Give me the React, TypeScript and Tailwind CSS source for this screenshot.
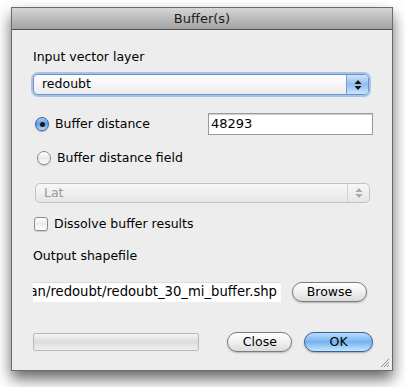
import React from 'react';

const font = { fontFamily: '"DejaVu Sans", "Liberation Sans", sans-serif' };

function Radio({ checked }: { checked: boolean }) {
  if (checked) {
    return (
      <span className="flex h-[14px] w-[14px] items-center justify-center rounded-full border border-[#3f5f93] bg-gradient-to-b from-[#a9cdf5] via-[#5a9ae6] to-[#bfe1ff] shadow-[0_1px_1px_rgba(0,0,0,0.3)]">
        <span className="h-[5px] w-[5px] rounded-full bg-[#1a1a1a]" />
      </span>
    );
  }
  return (
    <span className="h-[14px] w-[14px] rounded-full border border-[#8a8a8a] bg-gradient-to-b from-[#ffffff] via-[#e9e9e9] to-[#ffffff] shadow-[0_1px_1px_rgba(0,0,0,0.2)]" />
  );
}

function Arrows({ color }: { color: string }) {
  return (
    <svg width="8" height="12" viewBox="0 0 8 12">
      <path d="M4 1 L7.5 5 L0.5 5 Z" fill={color} />
      <path d="M4 11 L7.5 7 L0.5 7 Z" fill={color} />
    </svg>
  );
}

export default function App() {
  return (
    <div className="h-[387px] w-[405px] overflow-hidden bg-white pl-[11px] pt-[7px]" style={font}>
      <div className="flex h-[364px] w-[382px] flex-col border border-[#6b6b6b] bg-[#ededed] shadow-[0_8px_14px_rgba(0,0,0,0.6)]">
        {/* Title bar */}
        <div className="flex h-[22px] items-center justify-center border-b border-[#4f4f4f] bg-gradient-to-b from-[#d6d6d6] to-[#a3a3a3] text-[13px] text-[#1a1a1a]">
          Buffer(s)
        </div>

        <div className="flex flex-col pl-[21px] pr-[19px] text-[12.5px] text-black">
          <div className="mt-[19px] flex h-4 items-center">Input vector layer</div>

          {/* Layer combo */}
          <div className="mt-[9px] flex h-[21px] w-[336px] items-center rounded-[5px] border border-[#6d8fc4] bg-gradient-to-b from-white to-[#ececec] shadow-[0_0_0_2px_rgba(110,160,230,0.55)]">
            <span className="flex-1 pl-2">redoubt</span>
            <span className="flex h-full w-[22px] items-center justify-center rounded-r-[4px] border-l border-[#7a9cd0] bg-gradient-to-b from-[#cfe4fb] via-[#8fbef0] to-[#c9e6ff]">
              <Arrows color="#111" />
            </span>
          </div>

          {/* Buffer distance */}
          <div className="mt-[18px] flex h-[22px] items-center">
            <span className="ml-[2px] flex w-[174px] items-center gap-[6px]">
              <Radio checked />
              <span>Buffer distance</span>
            </span>
            <span className="flex h-[22px] w-[166px] items-center border border-[#9a9a9a] bg-white pl-[2px] text-[13px] shadow-[inset_0_1px_1px_rgba(0,0,0,0.2)]">
              48293
            </span>
          </div>

          {/* Buffer distance field */}
          <div className="mt-[15px] flex h-4 items-center gap-[6px] pl-[4px]">
            <Radio checked={false} />
            <span>Buffer distance field</span>
          </div>

          {/* Lat combo (disabled) */}
          <div className="mt-[17px] ml-[2px] flex h-[20px] w-[335px] items-center rounded-[5px] border border-[#c2c2c2] bg-gradient-to-b from-[#f7f7f7] to-[#e6e6e6]">
            <span className="flex-1 pl-2 text-[#9a9a9a]">Lat</span>
            <span className="flex h-full w-[22px] items-center justify-center border-l border-[#d2d2d2]">
              <Arrows color="#a8a8a8" />
            </span>
          </div>

          {/* Dissolve */}
          <div className="mt-[13px] flex h-4 items-center gap-[6px] pl-[1px]">
            <span className="h-[14px] w-[14px] rounded-[3px] border border-[#8c8c8c] bg-gradient-to-b from-white via-[#ececec] to-white shadow-[0_1px_1px_rgba(0,0,0,0.15)]" />
            <span>Dissolve buffer results</span>
          </div>

          <div className="mt-[16px] flex h-4 items-center">Output shapefile</div>

          {/* Output file row */}
          <div className="mt-[18px] flex h-[20px] items-center">
            <span className="flex h-[20px] w-[248px] items-center justify-end overflow-hidden whitespace-nowrap bg-white pr-[4px] text-[13.2px] shadow-[inset_0_1px_1px_rgba(0,0,0,0.15)]">
              an/redoubt/redoubt_30_mi_buffer.shp
            </span>
            <button className="ml-[11px] h-[20px] w-[75px] rounded-full border border-[#7c7c7c] bg-gradient-to-b from-white via-[#f0f0f0] to-[#dcdcdc] text-[12.5px] shadow-[0_1px_2px_rgba(0,0,0,0.25)]">
              Browse
            </button>
          </div>

          {/* Bottom row */}
          <div className="mt-[30px] flex h-[20px] items-center">
            <span className="h-[18px] w-[167px] rounded-[2px] border border-[#b8b8b8] bg-gradient-to-b from-[#f4f4f4] via-[#dcdcdc] to-[#f0f0f0]" />
            <button className="ml-[28px] h-[20px] w-[65px] rounded-full border border-[#7c7c7c] bg-gradient-to-b from-white via-[#f0f0f0] to-[#dcdcdc] text-[12.5px] shadow-[0_1px_2px_rgba(0,0,0,0.25)]">
              Close
            </button>
            <button className="ml-[12px] h-[20px] w-[69px] rounded-full border border-[#3a5f9e] bg-gradient-to-b from-[#bcdcfb] via-[#74b2ef] to-[#c6e6ff] text-[12.5px] shadow-[0_1px_2px_rgba(0,0,0,0.3)]">
              OK
            </button>
          </div>
        </div>

        {/* resize grip */}
        <div className="mt-auto flex justify-end pb-[2px] pr-[2px]">
          <svg width="10" height="10" viewBox="0 0 10 10">
            <path d="M9 1 L1 9 M9 4 L4 9 M9 7 L7 9" stroke="#8a8a8a" strokeWidth="1" />
          </svg>
        </div>
      </div>
    </div>
  );
}
